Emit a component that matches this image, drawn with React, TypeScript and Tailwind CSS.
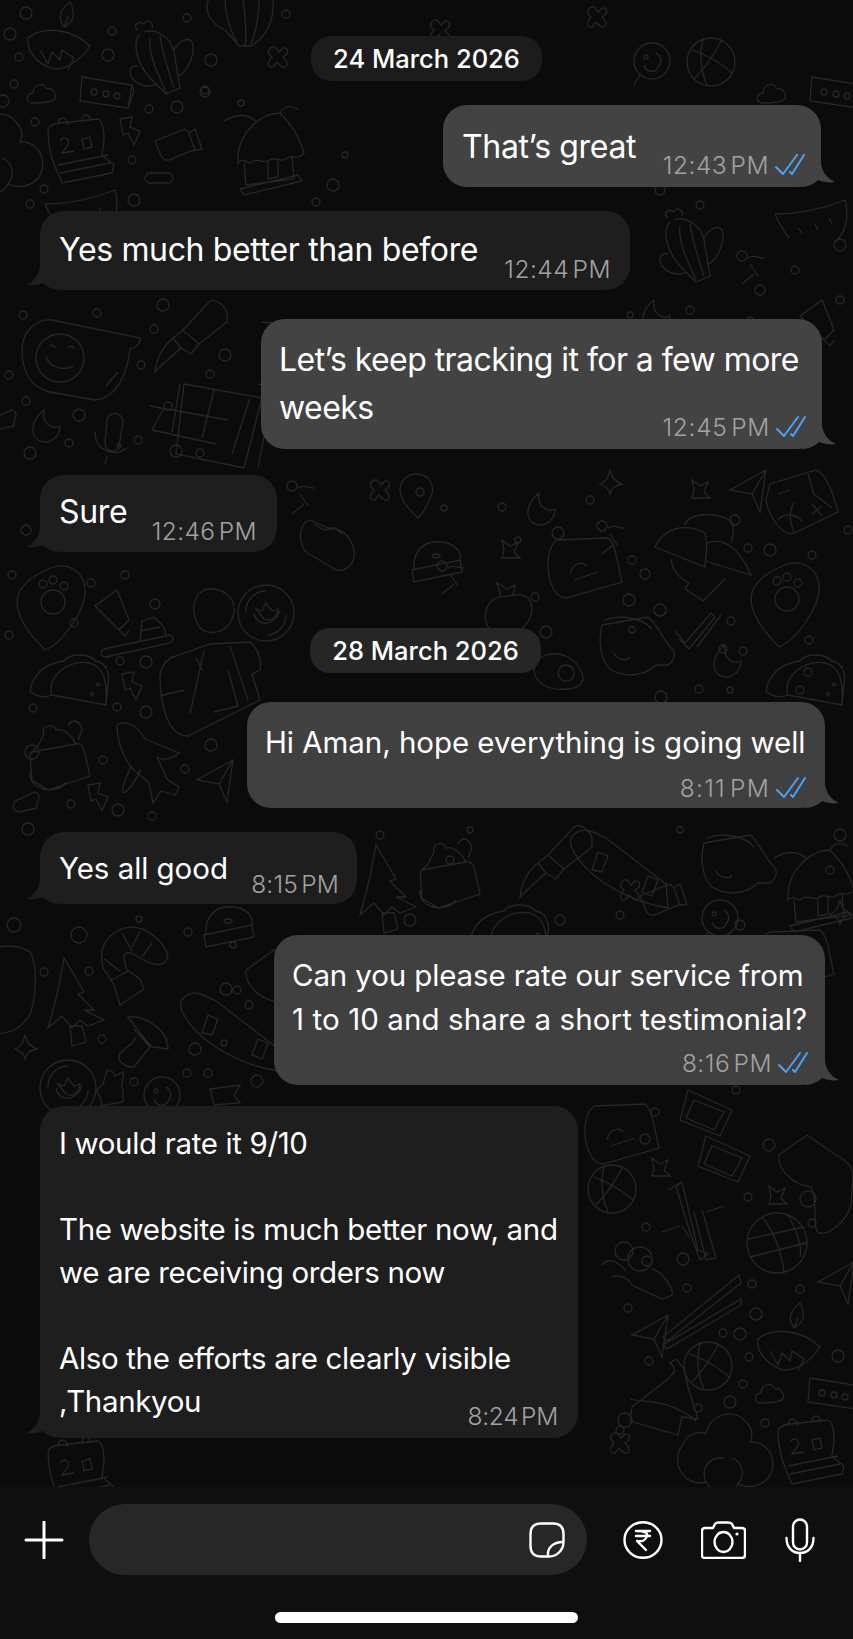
import type { ReactNode } from 'react';

const c = (x: number, y: number, r: number) =>
  `M${x - r} ${y}a${r} ${r} 0 1 0 ${2 * r} 0a${r} ${r} 0 1 0 ${-2 * r} 0Z `;

// wallpaper doodles, local coords
const SHAPES: Record<string, string> = {
  diya: 'M0 36C14 24 44 26 62 44C52 60 34 70 22 66C8 60 -2 48 0 36Z M36 25C28 14 34 6 42 0C48 12 46 20 36 25Z M36 25C38 20 40 17 40 14 M12 48l8 14l4-12l8 8l2-10l12 8l-6 12',
  cactus: 'M8 8C2 4 8-2 14 2C16-4 24 0 22 6 M10 12C2 20 6 40 20 56L36 72L50 66L44 30C42 16 26 6 14 10 M20 16C18 30 26 48 36 70 M30 14C32 30 38 48 44 66 M44 28C48 20 58 14 62 20C66 30 58 50 48 54 M8 44C0 42 -2 50 2 56C8 64 20 66 26 62',
  lantern: 'M4 0C-2 14 6 26 20 32L34 48L46 48C60 40 70 24 68 0 M20 0C20 16 26 36 34 48 M38 0C40 16 42 36 40 48 M54 0C54 20 50 36 46 46',
  box3: `M2 0L52 8L48 31L0 24Z M52 8L54 14L48 31 ${c(14, 15, 3)}${c(26, 17, 3)}${c(37, 19, 3)}`,
  cloud: 'M4 20C-2 18 0 10 6 10C6 2 16 -2 20 6C26 4 30 12 28 16C24 20 10 20 4 20Z',
  calendar: 'M0 14C4 8 10 8 12 8L50 4C54 6 56 14 56 24L54 40L66 50L64 58L14 68L8 54C2 40 0 26 0 14Z M10 10C10 2 18 0 20 10M34 6C34-2 42-2 42 6 M10 50L60 40 M12 58L62 48 M12 26C16 20 22 24 20 30L14 38L26 36 M34 24L36 34L44 32L42 22Z',
  bolt: 'M0 2L12 0L10 10L20 14L14 28L8 16L3 18Z',
  jar: 'M0 16L30 4L34 8L40 4L47 24L36 26L14 35C8 36 6 32 4 26Z M34 8L40 26',
  flower: 'M30 70C8 76-6 50 6 34C10 22 24 18 30 22C32 4 58-6 70 10C78 18 76 26 74 30C92 28 104 50 92 66C84 76 70 76 62 72C56 84 38 84 30 70Z M30 70C24 56 34 44 48 46M62 72C70 62 66 50 56 46',
  hut: 'M18 42C20 20 40 0 60 0C70 10 80 24 84 40C78 48 70 40 66 46C60 50 54 42 48 48C42 50 36 44 30 50C26 50 22 44 18 50Z M24 50L26 72L74 66L72 44 M20 76L78 62L82 68L24 82Z M48 48L48 66L58 64L58 46 M36 8C26 0 14 2 4 8M60 0C64-8 70-8 78-4',
  cross: 'M7 0L11 5L15 1C20 0 21 5 18 8L15 10L19 15C20 20 15 22 12 18L9 15L5 20C1 21 -1 17 1 14L4 10L1 7C-1 3 3-1 7 0Z',
  pill: 'M5 0H23A5 5 0 0 1 23 10H5A5 5 0 0 1 5 0Z',
  melon: 'M0 14C28 14 50 8 70 0C74 14 72 32 60 42 M14 38C8 30 4 24 0 14 M24 28l3 6M40 24l3 6M54 18l3 6',
  ball: `${c(24, 24, 24)}M5 12C18 16 36 26 46 36M16 2C12 16 14 34 20 47M34 3C28 14 24 22 8 40`,
  lolly: `${c(20, 18, 18)}M8 32L2 42M14 12a2 2 0 1 0 .1 0M24 10C30 14 30 20 26 24M12 22C14 30 24 30 26 24`,
  smiley: `M30 0L118 18C120 22 114 28 108 29C106 50 96 78 73 80L28 72C8 68 0 50 0 30C0 12 14-2 30 0Z ${c(38, 38, 24)}M24 36C26 46 40 52 52 46M28 26c2-2 4-1 5 2M46 28c2-3 5-2 6 1M84 66L96 52`,
  pen: 'M26 48L8 64L0 72C2 56 8 46 18 38Z M18 38L28 30L44 44L36 54L26 48 M28 30L54 2C60-2 68 4 72 12L72 22L44 44',
  grid: 'M34 0L112 14L94 84L26 70Z M0 22L78 36 M14 24L2 46L66 60 M30 0L22 48 M64 6L52 54M100 14L82 70M112-62L136-60L108 84 M112-30L134-26M108 0L130 4',
  moon: 'M14 0C4 8-2 22 8 30C18 36 30 28 30 16C22 20 12 14 14 0Z',
  mic: 'M12 10C14 0 28 2 28 12L24 36C22 44 10 42 10 34Z M0 22C0 40 18 48 32 38M12 46L10 54M24 34a2 2 0 1 0 .1 0',
  paw: `M34 8C50 2 66 10 68 28C70 50 44 84 28 90C18 80 0 60 0 42C0 26 18 14 34 8Z ${c(36, 42, 12)}${c(26, 24, 4)}${c(36, 20, 4)}${c(47, 26, 4)}`,
  tube: 'M0 16L22 0L34 30L24 40Z M24 40L30 46L34 40',
  spatula: 'M4 14L70 0C74 2 74 6 70 8L6 22C0 22 0 16 4 14Z M40 6L42-14L54-18L64-8L66 0 M40-4L60-8',
  person: `M44 0C60-4 76 6 74 22C70 44 50 46 40 38C32 26 30 8 44 0Z M16 66L50 54L90 52C100 60 102 76 100 80L92 84L100 110L28 146C6 146 0 110 0 86C2 74 8 68 16 66Z M44 60L30 124M70 56L88 110M0 106L24 100M36 68L42 80M68 80L78 116L54 122`,
  taco: 'M0 36C4 14 20 8 34 6C40-2 58-2 66 6C76 8 80 18 78 28L76 50L22 40C10 44 4 40 0 36Z M22 40C16 22 38 4 60 8C72 12 78 22 76 50M68 28a1.5 1.5 0 1 0 .1 0M62 38a1.5 1.5 0 1 0 .1 0',
  bag: 'M8 24L14 12C10 4 24 0 26 8C34 6 42 14 46 22C52 20 54 26 56 36L60 54L18 68L2 58L0 32Z M2 30L46 22 M0 50C-2 68 26 74 36 60 M38 4C42-4 50-2 52 8L48 18',
  rocket: 'M0 2C10-4 22 4 28 16L62 30C56 36 44 38 40 34L50 56L62 64L58 72L44 68L36 80L32 60L14 44C4 30 0 16 0 2Z M14 44C8 56 4 66 6 70C12 68 20 56 24 46',
  plane: 'M36 0L0 20L22 24L30 42Z M22 24L36 0',
  toast: 'M4 8L22 0C28 2 26 8 24 10L24 16L6 20C-2 18 -1 12 4 8Z',
  badge: `${c(28, 28, 28)}M16 28C18 42 36 42 42 26M8 28A20 20 0 0 1 28 6M48 30A20 20 0 0 1 30 50M18 24L24 26L28 18L34 26L40 24C40 30 34 38 26 34Z`,
  shrimp: 'M2 36C-2 14 22-4 42 4C50 6 64 18 68 30C66 44 52 40 42 34C34 30 28 24 24 30L26 44L40 54L44 64L20 80L14 60L8 50C2 44 2 40 2 36Z M22 8L32 26M40 6L32 22M52 18L42 32M4 34L20 46M10 56L28 46',
  hat: 'M2 30L50 20L52 32L4 42Z M4 30C2 12 14 0 30 2C44 2 52 12 50 20M26 14a4 2 0 1 0 .1 0',
  avocado: 'M22 0C30 14 28 46 22 62C12 80 -4 82 -16 82L-22 0C-10-8 10-8 22 0Z',
  tree: 'M16 0L36 34L30 36L46 52L36 52L56 62L40 68L32 62L24 70L14 58L0 70L6 48L10 32Z M22 68L34 68L38 84L24 88Z',
  mushroom: 'M10 0C26-2 50 12 50 32L34 30C24 20 18 10 10 0Z M16 12L32 30L16 50C6 50-2 44 2 36L14 26L18 20',
  board: 'M2 6C12-4 20 0 36 8L96 54L98 78C60 72 20 50 4 22C0 16 0 10 2 6Z M28 22l10 4l-6 16l-10-2Z M78 46l10 4l-6 16l-10-4Z',
  star: 'M10 0C12 8 14 10 22 14C14 16 12 18 10 24C8 18 6 16 0 14C6 12 8 8 10 0Z',
  flag: 'M0 4L30 0L24 10L30 18L4 20Z',
  hand: 'M6 14L10 0L16 2L18 6L26 2C28 8 22 16 26 20L26 32L4 36C6 28 0 24 0 20Z',
  pin: 'M17 0C30 0 34 12 32 20C28 30 22 40 18 44C10 36 0 26 0 16C0 6 8 0 17 0Z M20 14a4 4 0 1 0 .1 0',
  tomato: 'M28 8L10 0C-2 4-2 22 6 32L36 50C46 52 56 44 54 30C50 14 40 8 28 8Z M14 4L24 10L36 8L42 14',
  calc: `M8 14L54 0C64 4 70 20 76 42L30 64C18 64 6 44 4 30Z M16 24L28 20M46 4L52 24L70 38M32 32C26 44 28 52 32 62M60 36l-10 8M50 34l10 12M16 50C22 42 36 44 40 52`,
  hats: 'M0 34C10 14 30 10 50 20C54 32 50 44 50 54Z M30 12C34 0 60-2 76 8C80 14 78 24 76 30 M52 30C68 24 84 34 96 62L50 48 M16 46C18 60 26 66 34 70L30 76L48 88L70 66',
  cup: 'M4 8L50 0C58 6 64 20 72 30C78 34 78 42 70 48L58 48C48 58 28 62 12 52C2 42 0 24 4 8Z M6 4C16-2 42-2 54 12 M16 36C20 44 30 44 32 40',
  check: 'M0 18L10 30L36 0L40 4L14 36L4 26 M22 34L46 2',
  speech: 'M10 2L60 0C68 6 70 28 74 44L18 60C8 60 0 46 0 26C0 14 4 4 10 2Z M22 36C24 26 34 22 38 28M26 42L50 34',
  apple: 'M14 14C0 18-4 36 6 48L30 50C42 44 52 30 44 16C36 8 24 14 14 14Z M16 14L12 0L22 6L30 2L28 12',
  egg: 'M12 0C26-4 42 2 48 18C52 28 44 34 32 34C18 36 2 30 0 16C0 8 6 2 12 0Z M32 10a8 8 0 1 0 .1 0',
  polaroid: 'M8 0L52 20L40 46L0 30Z M14 10L44 22L34 40L6 28Z',
  globe: `${c(29, 30, 30)}M0 26L56 14M2 44L58 30M14 4C26 18 34 40 36 60M40 2C52 24 54 36 52 44`,
  bamboo: 'M20 0L36 68L46 72L38 78L26 44L14 4Z M40 28L54 76L44 78L32 30 M6 8L20 0M44 30L62 24M0 50L18 44M20 44L28 56',
  chopsticks: 'M76 0L0 62L4 66L78 8Z M78 24L0 70L4 74L78 30Z',
  boot: 'M6 20L34 0L60 18C70 24 80 30 80 40L78 70C72 90 54 100 46 98C38 92 46 68 38 52C20 50 4 34 6 20Z',
  berries: `${c(22, 8, 9)}${c(38, 16, 12)}M0 22C6 14 16 18 24 28M10 34C20 30 28 38 30 42L60 56L70 52C72 46 60 28 50 26`,
  house: 'M4 50L40 22C46 16 50 12 42 6L48 2L56 12L60 30L70 62L54 60L50 78L2 64Z M2 42C14 46 40 40 68 64',
  spark: 'M2 0L10 6L18 2L14 12L20 18L8 18L2 18L4 10Z',
  knot: `${c(2, 6, 5)}M8 8C14 4 18 8 24 8M10 14L18 26M2 34L14 24`,
};

// [shape, x, y]
const PLACED: [string, number, number][] = [
  ['diya', 28, 2], ['diya', 758, 1303], ['cactus', 130, 22], ['lantern', 205, -2], ['box3', 80, 77], ['box3', 810, 77], ['box3', 808, 1378],
  ['cloud', 27, 83], ['cloud', 757, 83], ['cloud', 755, 1383], ['calendar', 48, 115], ['calendar', 778, 1416], ['calendar', 48, 1437], ['bolt', 120, 117],
  ['jar', 155, 125], ['flower', -54, 112], ['flower', 676, 1412], ['hut', 220, 113], ['cross', 268, 47], ['cross', 587, 7], ['cross', 610, 1433], ['pill', 145, 173],
  ['melon', 45, 190], ['melon', 775, 200], ['ball', 687, 38], ['lolly', 632, 43], ['cross', 430, 20],
  ['smiley', 22, 320], ['pen', 155, 300], ['grid', 150, 384], ['moon', 30, 410], ['mic', 95, 410], ['toast', -10, 410],
  ['pin', 400, 474], ['tomato', 300, 520], ['calc', 762, 470], ['hats', 655, 513], ['paw', 751, 557], ['paw', 17, 560], ['cup', 598, 617], ['check', 675, 613],
  ['speech', 548, 538], ['moon', 525, 493], ['moon', 711, 645], ['apple', 485, 583], ['egg', 534, 655], ['taco', 766, 655], ['taco', 30, 655],
  ['person', 160, 590], ['badge', 238, 585], ['tube', 95, 590], ['spatula', 100, 635], ['bag', 30, 722], ['rocket', 117, 723], ['plane', 197, 760],
  ['bolt', 88, 783], ['bolt', 122, 672], ['toast', 13, 792], ['shrimp', 100, 925], ['hat', 202, 905], ['avocado', 8, 952], ['tree', 48, 958], ['mushroom', 118, 1017],
  ['board', 180, 993], ['star', 15, 1035], ['flag', 210, 1085], ['hand', 97, 1070], ['lolly', 142, 1077], ['badge', 40, 1060], ['boot', 240, 950],
  ['polaroid', 680, 1090], ['speech', 585, 1104], ['ball', 588, 1165], ['spark', 650, 1158], ['bamboo', 662, 1182], ['polaroid', 698, 1136], ['boot', 773, 1135], ['spark', 767, 1186],
  ['globe', 748, 1213], ['berries', 602, 1243], ['chopsticks', 663, 1275], ['plane', 632, 1315], ['ball', 684, 1342], ['house', 628, 1357], ['plane', 818, 1262],
  ['jar', 640, 880], ['pen', 520, 825], ['bag', 420, 840], ['cup', 700, 835], ['taco', 470, 905], ['board', 570, 830], ['hut', 770, 850], ['tree', 360, 845], ['speech', 760, 930],
  ['cross', 620, 880], ['star', 830, 900], ['knot', 740, 250], ['cactus', 660, 210], ['tube', 800, 300], ['moon', 640, 300], ['lolly', 700, 900],
  ['cross', 370, 480], ['knot', 440, 560], ['knot', 290, 480], ['hat', 410, 540], ['spark', 500, 540], ['star', 600, 470], ['knot', 600, 520], ['spark', 690, 480], ['plane', 730, 470],
];

const DOTS: [number, number, number][] = [
  [26, 13, 6], [10, 34, 6], [112, 31, 4], [187, 18, 4], [108, 55, 6], [19, 57, 4], [14, 84, 4], [3, 101, 6], [35, 122, 4], [205, 92, 5], [149, 109, 4], [177, 107, 6], [132, 160, 4], [44, 189, 4], [134, 200, 6], [30, 204, 4],
  [211, 60, 6], [205, 90, 4], [241, 103, 3], [286, 14, 4], [333, 185, 6], [316, 202, 4], [345, 155, 3], [23, 315, 4], [97, 313, 4], [163, 305, 6], [154, 329, 4], [141, 365, 4], [168, 406, 4], [225, 355, 6], [210, 374, 4],
  [9, 375, 4], [26, 401, 4], [79, 415, 6], [69, 443, 4], [30, 453, 6], [138, 440, 4], [176, 451, 6], [200, 453, 4], [26, 530, 5], [12, 575, 4], [91, 583, 4], [74, 623, 4], [9, 635, 4], [125, 575, 4], [155, 604, 5], [120, 661, 4],
  [146, 662, 6], [33, 708, 4], [117, 707, 4], [146, 712, 6], [103, 760, 4], [32, 752, 7], [211, 745, 6], [185, 769, 4], [71, 804, 4], [118, 810, 6], [152, 816, 4], [28, 829, 6], [14, 925, 7], [79, 935, 8], [139, 919, 3], [188, 932, 4], [233, 945, 3],
  [44, 972, 4], [89, 971, 4], [102, 1039, 4], [195, 1049, 6], [224, 1043, 3], [237, 990, 4], [226, 989, 6], [249, 1005, 4], [187, 1073, 4], [208, 1073, 4], [257, 1081, 6], [134, 1082, 4],
  [655, 1112, 4], [645, 1139, 5], [736, 1090, 4], [769, 1145, 6], [808, 1199, 8], [748, 1197, 4], [812, 1223, 4], [646, 1227, 4], [647, 1261, 5], [683, 1259, 6], [687, 1288, 4], [752, 1284, 4], [800, 1289, 4], [628, 1308, 4], [756, 1314, 6], [723, 1333, 4], [740, 1334, 6],
  [649, 1361, 4], [749, 1357, 4], [838, 1356, 6], [743, 1384, 4], [698, 1408, 4], [730, 1402, 6], [765, 1423, 4], [625, 1420, 7], [620, 1430, 4],
  [502, 507, 4], [444, 508, 3], [518, 540, 3], [558, 533, 6], [632, 560, 4], [645, 574, 5], [535, 597, 4], [629, 600, 6], [546, 632, 6], [660, 610, 6], [731, 621, 4], [723, 649, 4], [743, 651, 4], [699, 689, 4], [661, 697, 6], [809, 640, 4], [808, 672, 4],
  [735, 520, 5], [748, 548, 4], [770, 550, 6], [812, 555, 4], [848, 530, 4], [632, 630, 3], [590, 500, 4], [730, 690, 3], [800, 690, 4],
  [660, 190, 5], [700, 205, 4], [760, 290, 5], [840, 300, 4], [840, 245, 6], [795, 270, 4], [690, 310, 4], [630, 315, 3], [750, 320, 3], [450, 860, 4], [560, 920, 5], [410, 920, 6], [380, 835, 4], [620, 915, 4], [740, 925, 5], [680, 830, 3], [840, 835, 6], [830, 870, 4], [470, 830, 3],
];

function Wallpaper() {
  return (
    <svg className="absolute inset-0" width={853} height={1487} viewBox="0 0 853 1487" fill="none" stroke="#272727" strokeWidth={1.3}>
      {PLACED.map(([name, x, y], i) => (
        <path key={i} d={SHAPES[name]} transform={`translate(${x} ${y})`} />
      ))}
      <path d={DOTS.map(([x, y, r]) => c(x, y, r)).join('')} />
    </svg>
  );
}

function Tail({ side, tone }: { side: 'left' | 'right'; tone: string }) {
  const pos = side === 'right' ? 'right-[-14px]' : 'left-[-14px] scale-x-[-1]';
  return (
    <svg className={`absolute bottom-0 ${pos} ${tone}`} width={34} height={24} viewBox="0 0 34 24">
      <path fill="currentColor" d="M20 0C21 8 25 15 34 19C28 20 22 19 17 17C13 21 7 24 0 24Z" />
    </svg>
  );
}

function Ticks() {
  return (
    <svg className="ml-[6px]" width={30} height={22} viewBox="0 0 30 22" fill="none" stroke="#4aa3f0" strokeWidth={2} strokeLinecap="round" strokeLinejoin="round">
      <path d="M1 13L8 20L22 1" />
      <path d="M15 18L17 20L29 1" />
    </svg>
  );
}

function Time({ label, read, className = '' }: { label: string; read?: boolean; className?: string }) {
  return (
    <div className={`flex items-center text-[24.5px] leading-[28px] font-light whitespace-nowrap text-[#a3a3a3] [word-spacing:-4px] ${className}`}>
      <span>{label}</span>
      {read && <Ticks />}
    </div>
  );
}

function Sent({ className, tone, children }: { className: string; tone: string; children: ReactNode }) {
  return (
    <div className={`relative self-end rounded-[24px] ${tone} ${className}`}>
      {children}
      <Tail side="right" tone={tone === 'bg-[#434343]' ? 'text-[#434343]' : 'text-[#404040]'} />
    </div>
  );
}

function Received({ className, children }: { className: string; children: ReactNode }) {
  return (
    <div className={`relative ml-[40px] self-start rounded-[24px] bg-[#1e1e1e] ${className}`}>
      {children}
      <Tail side="left" tone="text-[#1e1e1e]" />
    </div>
  );
}

function DateChip({ label, className }: { label: string; className: string }) {
  return (
    <div className={`flex h-[45px] w-[231px] items-center justify-center self-center rounded-[20px] text-[25.5px] font-medium text-white ${className}`}>
      {label}
    </div>
  );
}

const big = 'text-[32px] leading-[48px] tracking-[-0.35px] whitespace-nowrap';
const small = 'text-[29.5px] leading-[44px] tracking-[-0.05px] whitespace-nowrap';
const note = 'text-[29.5px] leading-[43px] tracking-[-0.35px] whitespace-pre';

export default function App() {
  return (
    <div className="relative flex h-[1639px] w-[853px] flex-col overflow-hidden bg-[#0b0b0b] font-[Inter,sans-serif] font-normal text-white">
      <div className="relative flex h-[1487px] flex-col pt-[36px]">
        <Wallpaper />
        <DateChip label="24 March 2026" className="relative bg-[#1c1c1c] pt-[1px]" />

        <Sent tone="bg-[#434343]" className="mt-[24px] mr-[32px] flex h-[82px] w-[378px] items-start justify-between pt-[18px] pr-[16px] pl-[19px]">
          <div className={big}>That’s great</div>
          <Time label="12:43 PM" read className="pt-[28px] tracking-[0.5px]" />
        </Sent>
        <Received className="mt-[24px] flex h-[79px] w-[590px] items-start justify-between pt-[15px] pr-[19px] pl-[19px]">
          <div className={big}>Yes much better than before</div>
          <Time label="12:44 PM" className="pt-[29px] tracking-[0.5px]" />
        </Received>
        <Sent tone="bg-[#434343]" className="mt-[29px] mr-[31px] flex h-[130px] w-[561px] flex-col pt-[17px] pr-[16px] pl-[18px]">
          <div className="text-[32px] leading-[48px] tracking-[-0.55px] whitespace-nowrap">Let’s keep tracking it for a few more</div>
          <div className="flex items-start justify-between">
            <div className="text-[32px] leading-[48px] tracking-[-0.55px]">weeks</div>
            <Time label="12:45 PM" read className="pt-[29px] tracking-[0.7px]" />
          </div>
        </Sent>
        <Received className="mt-[26px] flex h-[77px] w-[237px] items-start justify-between pt-[13px] pr-[20px] pl-[19px]">
          <div className={big}>Sure</div>
          <Time label="12:46 PM" className="pt-[29px] tracking-[0.4px]" />
        </Received>

        <DateChip label="28 March 2026" className="relative mt-[76px] -translate-x-[1px] bg-[#262626] pt-[2px]" />

        <Sent tone="bg-[#404040]" className="mt-[29px] mr-[28px] flex h-[106px] w-[578px] flex-col pt-[18px] pr-[19px] pl-[18px]">
          <div className={small}>Hi Aman, hope everything is going well</div>
          <Time label="8:11 PM" read className="mt-[10px] self-end tracking-[1.25px]" />
        </Sent>
        <Received className="mt-[24px] flex h-[72px] w-[317px] items-start justify-between pt-[14px] pr-[18px] pl-[19px]">
          <div className={small}>Yes all good</div>
          <Time label="8:15 PM" className="pt-[24px] tracking-[0.2px]" />
        </Received>
        <Sent tone="bg-[#404040]" className="mt-[31px] mr-[28px] flex h-[150px] w-[551px] flex-col pt-[18px] pr-[17px] pl-[18px]">
          <div className={small}>
            <span className="tracking-[-0.13px]">Can you please rate our service from</span>
            <br />
            <span className="tracking-[0.1px]">1 to 10 and share a short testimonial?</span>
          </div>
          <Time label="8:16 PM" read className="mt-[8px] self-end tracking-[0.5px]" />
        </Sent>
        <Received className="mt-[21px] h-[332px] w-[538px] pt-[16px] pr-[20px] pl-[19px]">
          <div className={note}>{'I would rate it 9/10\n\nThe website is much better now, and\nwe are receiving orders now\n\nAlso the efforts are clearly visible'}</div>
          <div className="flex items-start justify-between">
            <div className={note}>,Thankyou</div>
            <Time label="8:24 PM" className="pt-[22px] tracking-[-0.25px]" />
          </div>
        </Received>
      </div>

      <div className="relative flex h-[152px] flex-col bg-[#0f0f0f] pt-[17px]">
        <div className="flex h-[71px] items-center pl-[24px]">
          <svg width={40} height={38} viewBox="0 0 40 38" stroke="white" strokeWidth={3} strokeLinecap="round">
            <path d="M20 1V37M2 19H38" />
          </svg>
          <div className="ml-[25px] flex h-[71px] w-[498px] items-center justify-end rounded-full bg-[#272727] pr-[22px]">
            <svg width={36} height={36} viewBox="0 0 36 36" fill="none" stroke="white" strokeWidth={2.4} strokeLinejoin="round">
              <path d="M12 1.5H24C31 1.5 34.5 5 34.5 12V20C34.5 28 28 34.5 20 34.5H12C5 34.5 1.5 31 1.5 24V12C1.5 5 5 1.5 12 1.5Z" />
              <path d="M19 34C18 26 24 20 34 20" />
            </svg>
          </div>
          <svg className="ml-[36px]" width={40} height={38} viewBox="0 0 40 38" fill="none" stroke="white" strokeWidth={2.4} strokeLinecap="round" strokeLinejoin="round">
            <ellipse cx={20} cy={19} rx={18.5} ry={17.8} />
            <path d="M13 10H27M13 15H27M14 10C22 10 25 12 24 15C23 19 19 21 14 20L23 29" />
          </svg>
          <svg className="ml-[38px]" width={45} height={38} viewBox="0 0 45 38" fill="none" stroke="white" strokeWidth={2.4} strokeLinejoin="round">
            <path d="M4 7H12L14 3C15 1.5 16 1.5 18 1.5H27C29 1.5 30 1.5 31 3L33 7H41C43 7 44 8 44 10V34C44 36 43 37 41 37H4C2 37 1 36 1 34V10C1 8 2 7 4 7Z" />
            <ellipse cx={22.5} cy={21} rx={9} ry={10} />
            <circle cx={36} cy={13} r={1.6} fill="white" stroke="none" />
          </svg>
          <svg className="ml-[39px]" width={30} height={44} viewBox="0 0 30 44" fill="none" stroke="white" strokeWidth={2.4} strokeLinecap="round">
            <rect x={8} y={1.5} width={14} height={30} rx={7} />
            <path d="M1.5 20C1.5 29 7 35 15 35C23 35 28.5 29 28.5 20M15 35V43" />
          </svg>
        </div>
        <div className="mt-[37px] h-[11px] w-[303px] self-center rounded-full bg-white" />
      </div>
    </div>
  );
}
